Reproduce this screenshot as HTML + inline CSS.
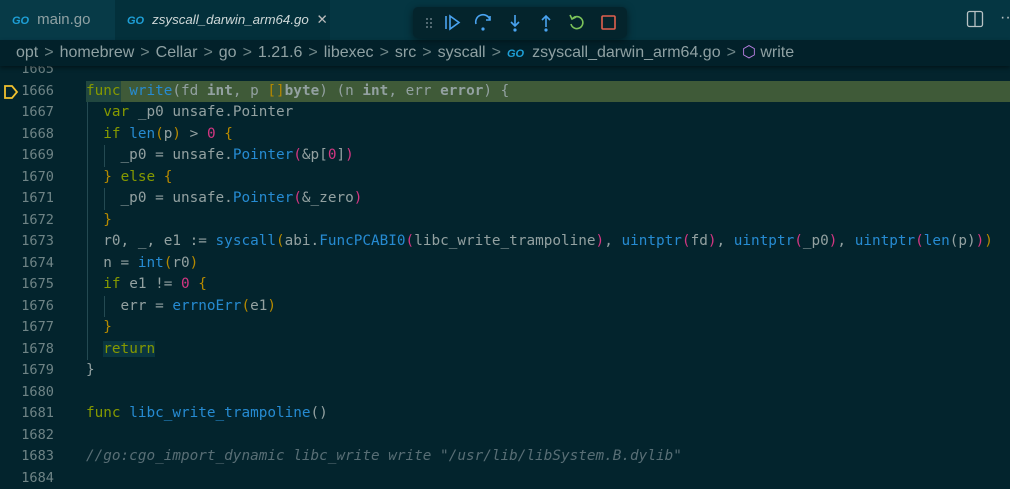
<!DOCTYPE html><html><head><style>
body{margin:0;width:1010px;height:484px;overflow:hidden;background:#03242d;font-family:"Liberation Sans",sans-serif;position:relative}
.tabs{position:absolute;left:0;top:0;width:1010px;height:40px;background:#053642}
.tab{position:absolute;top:0;height:40px;line-height:40px;font-size:15px;color:#8fa1a3;white-space:nowrap}
.go{color:#1e9fd6;font-weight:bold;font-style:italic;font-size:11px;margin-right:8px}
.bc{position:absolute;top:40px;left:0;width:1010px;height:26px;background:#02212a;line-height:26px;font-size:16px;color:#8fa1a3;z-index:3;box-shadow:0 2px 4px rgba(0,0,0,.4);white-space:nowrap}
.bc .s{color:#6f8688;margin:0 6px}
.code{position:absolute;top:59px;left:0;width:1010px;font-family:"DejaVu Sans Mono",monospace;font-size:14.35px}
.l{position:relative;height:21.5px;line-height:21.5px;white-space:pre}
.n{position:absolute;left:0;width:54px;text-align:right;color:#6f8486;font-size:13.6px}
.t{position:absolute;left:86px;color:#93a1a1}
.k{color:#859900}.f{color:#268bd2}.m{color:#d33682}.y{color:#b58900}.b{font-weight:bold}.c{color:#586e75;font-style:italic}
.g{position:absolute;width:1px;background:#244a52}
.dbg{position:absolute;left:413px;top:7px;width:214px;height:31px;background:#04242c;border-radius:5px;box-shadow:0 2px 8px rgba(0,0,0,.5);z-index:4}
</style></head><body>
<div class="tabs">
<div class="tab" style="left:0;width:115px;background:#073a47;padding-left:12px;box-sizing:border-box"><span class="go">GO</span>main.go</div>
<div class="tab" style="left:115px;width:215px;background:#03303b;padding-left:12px;box-sizing:border-box;color:#cfd8d8;font-style:italic;font-size:13.3px"><span class="go">GO</span>zsyscall_darwin_arm64.go <span style="font-style:normal;color:#bbb;margin-left:4px">✕</span></div>
<svg style="position:absolute;left:966px;top:10px" width="18" height="18"><rect x="1.5" y="1.5" width="15" height="15" rx="2" fill="none" stroke="#b8c2c4" stroke-width="1.3"/><line x1="9" y1="2" x2="9" y2="16" stroke="#b8c2c4" stroke-width="1.3"/></svg>
<div style="position:absolute;left:1000px;top:9px;color:#b8c2c4;font-size:16px">··</div>
</div>
<div class="dbg"><svg width="214" height="31">
<g fill="#6c8088"><circle cx="14" cy="12" r="1"/><circle cx="18" cy="12" r="1"/><circle cx="14" cy="16" r="1"/><circle cx="18" cy="16" r="1"/><circle cx="14" cy="20" r="1"/><circle cx="18" cy="20" r="1"/></g>
<g fill="none" stroke="#4aa3f0" stroke-width="1.6"><line x1="33" y1="9" x2="33" y2="22"/><path d="M37 9 L46 15.5 L37 22 Z"/>
<path d="M63 17 A6 6 0 1 1 77 13"/><path d="M77 9 L77 13 L73 13"/>
<line x1="102" y1="8" x2="102" y2="18"/><path d="M98 15 L102 19 L106 15"/>
<line x1="133" y1="10" x2="133" y2="20"/><path d="M129 13 L133 9 L137 13"/></g>
<g fill="#4aa3f0"><circle cx="70" cy="22" r="1.6"/><circle cx="102" cy="23" r="1.6"/><circle cx="133" cy="23" r="1.6"/></g>
<path d="M160 11 A6 6 0 1 1 158 17" fill="none" stroke="#7cc35a" stroke-width="1.6"/><path d="M157 8 L159 12 L163 10" fill="none" stroke="#7cc35a" stroke-width="1.6"/>
<rect x="189" y="9" width="13" height="13" fill="none" stroke="#e0604e" stroke-width="1.6" rx="1"/>
</svg></div>
<div class="bc"><span style="margin-left:16px">opt</span><span class="s">&gt;</span>homebrew<span class="s">&gt;</span>Cellar<span class="s">&gt;</span>go<span class="s">&gt;</span>1.21.6<span class="s">&gt;</span>libexec<span class="s">&gt;</span>src<span class="s">&gt;</span>syscall<span class="s">&gt;</span><span class="go">GO</span>zsyscall_darwin_arm64.go<span class="s">&gt;</span><span style="color:#b77fe0">⬡</span> write</div>
<div class="code">
<div class="g" style="left:87px;top:43px;height:258px"></div>
<div class="g" style="left:104px;top:86px;height:21.5px"></div>
<div class="g" style="left:104px;top:129px;height:21.5px"></div>
<div class="g" style="left:104px;top:236.5px;height:21.5px"></div>
<div class="l"><span class="n">1665</span></div>
<div class="l" style="background:linear-gradient(90deg,transparent 86px,#21473f 86px,#21473f 121px,#3f5a38 121px)"><svg style="position:absolute;left:3px;top:3px" width="16" height="16"><path d="M2 2 H9 L14 8 L9 14 H2 Z" fill="none" stroke="#f2c12e" stroke-width="1.8"/></svg><span class="n">1666</span><span class="t"><span class="k">func</span> <span class="f">write</span>(fd <span class="b">int</span>, p <span class="y">[]</span><span class="b">byte</span>) (n <span class="b">int</span>, err <span class="b">error</span>) {</span></div>
<div class="l"><span class="n">1667</span><span class="t">  <span class="k">var</span> _p0 unsafe.Pointer</span></div>
<div class="l"><span class="n">1668</span><span class="t">  <span class="k">if</span> <span class="f">len</span><span class="y">(</span>p<span class="y">)</span> &gt; <span class="m">0</span> <span class="y">{</span></span></div>
<div class="l"><span class="n">1669</span><span class="t">    _p0 = unsafe.<span class="f">Pointer</span><span class="m">(</span>&amp;p[<span class="m">0</span>]<span class="m">)</span></span></div>
<div class="l"><span class="n">1670</span><span class="t">  <span class="y">}</span> <span class="k">else</span> <span class="y">{</span></span></div>
<div class="l"><span class="n">1671</span><span class="t">    _p0 = unsafe.<span class="f">Pointer</span><span class="m">(</span>&amp;_zero<span class="m">)</span></span></div>
<div class="l"><span class="n">1672</span><span class="t">  <span class="y">}</span></span></div>
<div class="l"><span class="n">1673</span><span class="t">  r0, _, e1 := <span class="f">syscall</span><span class="y">(</span>abi.<span class="f">FuncPCABI0</span><span class="m">(</span>libc_write_trampoline<span class="m">)</span>, <span class="f">uintptr</span><span class="m">(</span>fd<span class="m">)</span>, <span class="f">uintptr</span><span class="m">(</span>_p0<span class="m">)</span>, <span class="f">uintptr</span><span class="m">(</span><span class="f">len</span>(p)<span class="m">)</span><span class="y">)</span></span></div>
<div class="l"><span class="n">1674</span><span class="t">  n = <span class="f">int</span><span class="y">(</span>r0<span class="y">)</span></span></div>
<div class="l"><span class="n">1675</span><span class="t">  <span class="k">if</span> e1 != <span class="m">0</span> <span class="y">{</span></span></div>
<div class="l"><span class="n">1676</span><span class="t">    err = <span class="f">errnoErr</span><span class="y">(</span>e1<span class="y">)</span></span></div>
<div class="l"><span class="n">1677</span><span class="t">  <span class="y">}</span></span></div>
<div class="l"><span class="n">1678</span><span class="t">  <span class="k" style="background:#0a3640">return</span></span></div>
<div class="l"><span class="n">1679</span><span class="t">}</span></div>
<div class="l"><span class="n">1680</span></div>
<div class="l"><span class="n">1681</span><span class="t"><span class="k">func</span> <span class="f">libc_write_trampoline</span>()</span></div>
<div class="l"><span class="n">1682</span></div>
<div class="l"><span class="n">1683</span><span class="t"><span class="c">//go:cgo_import_dynamic libc_write write "/usr/lib/libSystem.B.dylib"</span></span></div>
<div class="l"><span class="n">1684</span></div>
</div>
</body></html>
